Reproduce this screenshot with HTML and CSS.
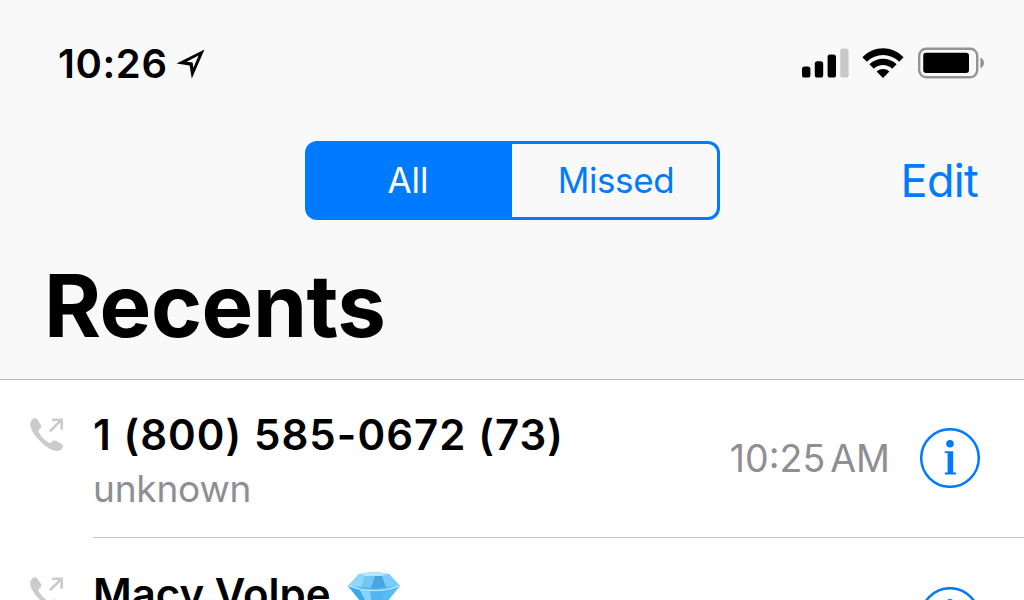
FILE: index.html
```html
<!DOCTYPE html>
<html lang="en">
<head>
    <meta charset="UTF-8">
    <meta name="viewport" content="width=device-width, initial-scale=1.0">
    <title>Recents</title>
    <link rel="stylesheet" href="styles.css">
</head>
<body>

    <header class="header">
        <div class="status-bar">
            <span class="clock">10:26</span>
            <svg class="location" width="30" height="30" viewBox="0 0 30 30">
                <path fill="#000" fill-rule="evenodd" d="M28.5 .5 L15.8 29.5 L13.6 16.6 L.5 14.4 Z M22.6 6.5 L10.6 12.8 L16.6 13.4 L17.4 18.8 Z"/>
            </svg>
            <div class="status-icons">
                <svg width="48" height="31" viewBox="0 0 48 31">
                    <rect x="0" y="18.5" width="8.4" height="11" rx="2.6"/>
                    <rect x="12.8" y="13.2" width="8.4" height="16.3" rx="2.6"/>
                    <rect x="25.6" y="6.5" width="8.4" height="23" rx="2.6"/>
                    <rect x="38.2" y="0.5" width="8.4" height="29" rx="2.6" fill="#c8c8c8"/>
                </svg>
                <svg class="wifi" width="42" height="31" viewBox="0 0 42 31">
                    <path d="M.4 9.2 C12-2.8 30-2.8 41.6 9.2 L37.2 13.7 C28 4.9 14 4.9 4.8 13.7 Z"/>
                    <path d="M7.4 16.2 C15 8.8 27 8.8 34.6 16.2 L30.2 20.7 C25 15.9 17 15.9 11.8 20.7 Z"/>
                    <path d="M14.6 23.5 C18.2 20.2 23.8 20.2 27.4 23.5 L21 30 Z"/>
                </svg>
                <svg class="battery" width="67" height="32" viewBox="0 0 67 32">
                    <rect x="1.2" y="1.7" width="58" height="28.6" rx="7" fill="none" stroke="#949494" stroke-width="2.4"/>
                    <rect x="5.2" y="5.8" width="45.8" height="20.2" rx="3"/>
                    <path fill="#949494" d="M62.4 10.6 Q66 12.6 66 16 Q66 19.4 62.4 21.4 Z"/>
                </svg>
            </div>
        </div>

        <div class="nav">
            <div class="segmented">
                <button class="segment active">All</button>
                <button class="segment">Missed</button>
            </div>
            <a class="edit">Edit</a>
        </div>

        <h1>Recents</h1>
    </header>

    <ul class="calls">
        <li class="call">
            <svg class="outgoing" width="34" height="34" viewBox="0 0 34 34">
                <path fill="#cbcbcb" d="M3.2 .8 Q5.6-.4 7.4 1.6 L10.8 6.8 Q12 9 10.2 10.8 L8.7 12.2 Q8.1 13 8.7 14.2 Q12.2 20.7 19 24.8 Q20.3 25.5 21.2 24.6 L22.6 23.2 Q24.2 21.8 26 22.8 L31.6 26 Q33.8 27.4 32.6 29.8 Q30.6 33.2 26.4 33 Q19.8 32.5 12 25 Q1.2 14.6 .3 7.4 Q0 3 3.2 .8 Z"/>
                <path fill="none" stroke="#cbcbcb" stroke-width="2.6" d="M19.8 13.4 L31.2 2 M22 1.7 H31.7 V11.4"/>
            </svg>
            <div class="details">
                <div class="row-content">
                    <div class="caller">
                        <div class="name number">1 (800) 585-0672 (73)</div>
                        <div class="label">unknown</div>
                    </div>
                    <span class="time">10:25<span class="meridiem">AM</span></span>
                    <svg class="info" width="60" height="60" viewBox="0 0 60 60">
                        <circle cx="30" cy="30" r="28.8" fill="none" stroke="#007aff" stroke-width="2.5"/>
                        <circle cx="30" cy="15.8" r="3.8" fill="#007aff"/>
                        <path fill="#007aff" d="M24.8 23.2 H33.2 V44.6 H36 V46.4 H24.8 V44.6 H27.6 V25 H24.8 Z"/>
                    </svg>
                </div>
            </div>
        </li>
        <li class="call">
            <svg class="outgoing" width="34" height="34" viewBox="0 0 34 34">
                <path fill="#cbcbcb" d="M3.2 .8 Q5.6-.4 7.4 1.6 L10.8 6.8 Q12 9 10.2 10.8 L8.7 12.2 Q8.1 13 8.7 14.2 Q12.2 20.7 19 24.8 Q20.3 25.5 21.2 24.6 L22.6 23.2 Q24.2 21.8 26 22.8 L31.6 26 Q33.8 27.4 32.6 29.8 Q30.6 33.2 26.4 33 Q19.8 32.5 12 25 Q1.2 14.6 .3 7.4 Q0 3 3.2 .8 Z"/>
                <path fill="none" stroke="#cbcbcb" stroke-width="2.6" d="M19.8 13.4 L31.2 2 M22 1.7 H31.7 V11.4"/>
            </svg>
            <div class="details">
                <div class="row-content">
                    <div class="caller">
                        <div class="name">
                            Macy Volpe
                            <svg class="gem" width="52" height="46" viewBox="0 0 52 46">
                                <path fill="#58bdf6" d="M0 14 L11 2 Q26-1.5 41 2 L52 14 L26 46 Z"/>
                                <path fill="#8ed8fb" d="M0 14 L11 2 L17 4 L14 15 Z"/>
                                <path fill="#b6e7fc" d="M11 2 Q26-1.5 41 2 L34 4 H17 Z"/>
                                <path fill="#4ba4df" d="M17 4 H34 L38 15 Q26 18 14 15 Z"/>
                                <path fill="#71c8f5" d="M17 4 L14 15 L23 16 L27 4 Z"/>
                                <path fill="#79cdf8" d="M34 4 L41 2 L52 14 L38 15 Z"/>
                                <path fill="#3ba9ee" d="M0 14 L12 18 L26 46 Z"/>
                                <path fill="#83d5fb" d="M12 18 Q26 20 39 18 L26 46 Z"/>
                                <path fill="#54b5f4" d="M22 19 L39 18 L26 46 Z"/>
                                <path fill="none" stroke="#d2f1fe" stroke-width="1.2" d="M1 14 L13 17.5 Q26 19.5 39 17.5 L51 14"/>
                            </svg>
                        </div>
                    </div>
                    <svg class="info" width="60" height="60" viewBox="0 0 60 60">
                        <circle cx="30" cy="30" r="28.8" fill="none" stroke="#007aff" stroke-width="2.5"/>
                        <circle cx="30" cy="15.8" r="3.8" fill="#007aff"/>
                        <path fill="#007aff" d="M24.8 23.2 H33.2 V44.6 H36 V46.4 H24.8 V44.6 H27.6 V25 H24.8 Z"/>
                    </svg>
                </div>
            </div>
        </li>
    </ul>

</body>
</html>
```
FILE: styles.css
```css
* {
    box-sizing: border-box;
}
body {
    font-family: Inter, "Liberation Sans", sans-serif;
    margin: 0;
    height: 600px;
    overflow: hidden;
    background-color: #fff;
    color: #000;
}
.header {
    height: 380px;
    padding-top: 38px;
    background-color: #f9f9f9;
    border-bottom: 1px solid #b9b9b9;
}
.status-bar {
    display: flex;
    align-items: center;
    height: 50px;
    padding: 0 39px 0 58px;
}
.clock {
    font-size: 40px;
    font-weight: 600;
    letter-spacing: 0.6px;
    line-height: 51px;
}
.location {
    margin: 2px 0 0 8px;
}
.status-icons {
    display: flex;
    align-items: center;
    margin-left: auto;
}
.wifi {
    margin-left: 12px;
}
.battery {
    margin-left: 14px;
}
.nav {
    display: grid;
    grid-template-columns: 1fr 415px 1fr;
    align-items: center;
    height: 79px;
    margin-top: 53px;
}
.segmented {
    grid-column: 2;
    display: flex;
    height: 79px;
    border: 3px solid #007aff;
    border-radius: 12px;
    background: linear-gradient(to right, #007aff 50%, transparent 50%);
}
.segment {
    flex: 1;
    padding: 0;
    border: none;
    background: none;
    color: #007aff;
    font-family: inherit;
    font-size: 35px;
    letter-spacing: -0.4px;
    line-height: 73px;
    padding-left: 4px;
}
.segment.active {
    padding: 0 3px 0 0;
    color: #fff;
    letter-spacing: 0;
}
.edit {
    justify-self: end;
    margin-right: 46px;
    color: #007aff;
    font-size: 45px;
    letter-spacing: -0.7px;
    line-height: 79px;
}
h1 {
    margin: 35px 0 0 44px;
    font-size: 87px;
    font-weight: 700;
    letter-spacing: -0.5px;
    line-height: 101px;
}
.calls {
    margin: -1px 0 0;
    padding: 0;
    list-style-type: none;
}
.call {
    display: flex;
    height: 159px;
    padding-left: 30px;
}
.outgoing {
    margin-top: 39px;
}
.details {
    flex: 1;
    margin-left: 29px;
    border-bottom: 1px solid #c8c7cc;
}
.row-content {
    display: flex;
    align-items: center;
    height: 158px;
    padding-right: 44px;
}
.caller {
    flex: 1;
    align-self: flex-start;
    padding-top: 32px;
}
.name {
    display: flex;
    align-items: center;
    font-size: 42px;
    font-weight: 600;
    line-height: 48px;
    white-space: nowrap;
}
.number {
    letter-spacing: 1.05px;
}
.label {
    margin-top: 10px;
    color: #8e8e93;
    font-size: 37px;
    letter-spacing: -0.2px;
    line-height: 40px;
}
.gem {
    margin: 2px 0 0 17px;
}
.time {
    margin-right: 30px;
    color: #8e8e93;
    font-size: 37.5px;
}
.meridiem {
    margin-left: 5px;
}
```
